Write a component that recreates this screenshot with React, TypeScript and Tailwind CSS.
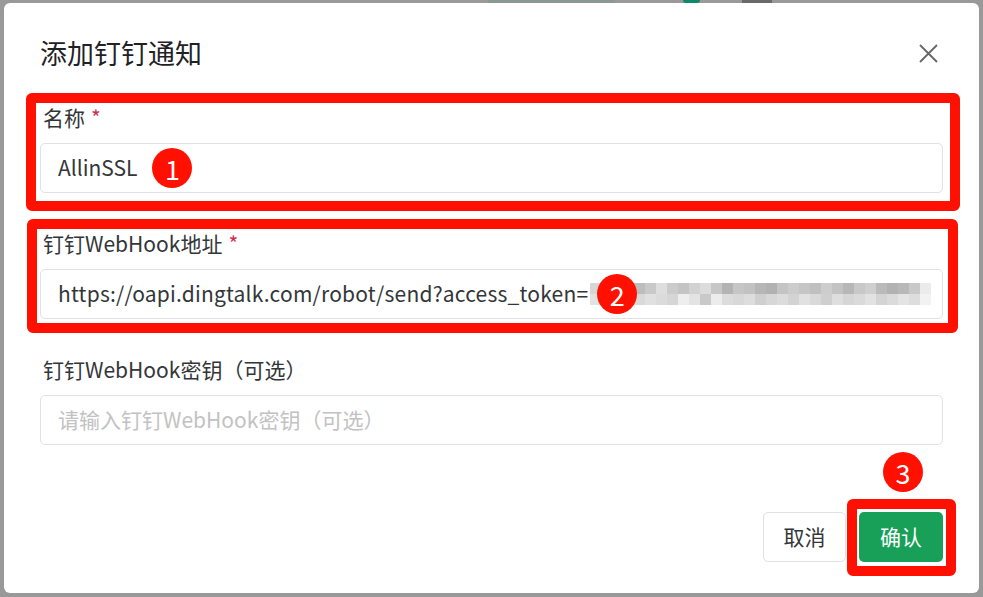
//External Imports
import React from "react";

//Setup the Mosaic Colours (Top and Bottom Rows of the Pixelated Token)
const mosaicTop = [
	"bg-[#d6d6d6]", "bg-[#cfcfcf]", "bg-[#c4c4c4]", "bg-[#c8c8c8]", "bg-[#bdbdbd]", "bg-[#c9c9c9]",
	"bg-[#dedede]", "bg-[#cbcbcb]", "bg-[#c4c4c4]", "bg-[#d2d2d2]", "bg-[#dcdcdc]", "bg-[#c7c7c7]",
	"bg-[#b3b3b3]", "bg-[#c6c6c6]", "bg-[#c2c2c2]", "bg-[#b6b6b6]", "bg-[#b1b1b1]", "bg-[#c4c4c4]",
	"bg-[#cccccc]", "bg-[#c5c5c5]", "bg-[#c0c0c0]", "bg-[#cdcdcd]", "bg-[#c3c3c3]", "bg-[#b7b7b7]",
	"bg-[#c8c8c8]", "bg-[#cfcfcf]", "bg-[#bababa]", "bg-[#b2b2b2]", "bg-[#b8b8b8]", "bg-[#c9c9c9]",
	"bg-[#ebebeb]",
];
const mosaicBottom = [
	"bg-[#e2e2e2]", "bg-[#dcdcdc]", "bg-[#d5d5d5]", "bg-[#dadada]", "bg-[#d9d9d9]", "bg-[#e0e0e0]",
	"bg-[#dbdbdb]", "bg-[#d6d6d6]", "bg-[#eeeeee]", "bg-[#e3e3e3]", "bg-[#c9c9c9]", "bg-[#ececec]",
	"bg-[#dcdcdc]", "bg-[#d8d8d8]", "bg-[#dddddd]", "bg-[#cfcfcf]", "bg-[#d7d7d7]", "bg-[#dcdcdc]",
	"bg-[#d3d3d3]", "bg-[#e1e1e1]", "bg-[#d9d9d9]", "bg-[#cfcfcf]", "bg-[#dedede]", "bg-[#d6d6d6]",
	"bg-[#dadada]", "bg-[#e2e2e2]", "bg-[#d4d4d4]", "bg-[#dbdbdb]", "bg-[#e4e4e4]", "bg-[#dddddd]",
	"bg-[#f2f2f2]",
];

//Numbered Annotation Badge
function Badge({ n, className = "" }: { n: number; className?: string }) {
	return (
		<span
			className={
				"flex h-[40px] w-[40px] shrink-0 items-center justify-center rounded-full bg-[#ff1000] text-[27px] leading-none text-white " +
				className
			}
		>
			{n}
		</span>
	);
}

//Red Annotation Frame
function Frame({ className }: { className: string }) {
	return (
		<div
			className={"pointer-events-none absolute rounded-[6px] border-[10px] border-[#ff1000] " + className}
		/>
	);
}

//Form Label
function Label({ text, required }: { text: string; required?: boolean }) {
	return (
		<div className="flex h-[41px] items-start pl-[3px] text-[21px] leading-[30px] text-[#333639]">
			{text}
			{required && <span className="ml-[6px] text-[#d03050]">*</span>}
		</div>
	);
}

//Setup the Page
export default function App() {
	return (
		<div
			className="relative h-[597px] w-[983px] overflow-hidden bg-[#999999]"
			style={{ fontFamily: '"Noto Sans CJK SC", "Noto Sans", sans-serif' }}
		>
			{/*Setup the Page Behind the Overlay*/}
			<div className="flex h-[3px]">
				<div className="ml-[488px] w-[126px] bg-[#8b9a90]" />
				<div className="ml-[69px] w-[17px] rounded-b-full bg-[#0f8a69]" />
				<div className="ml-[42px] w-[30px] bg-[#6a6a6a]" />
			</div>

			{/*Setup the Modal*/}
			<div className="absolute left-[4px] top-[3px] flex h-[590px] w-[975px] flex-col rounded-[6px] bg-white px-[36px] pb-[31px] pt-[30px]">
				{/*Setup the Header*/}
				<div className="flex h-[40px] items-center">
					<div className="text-[27px] leading-[40px] text-[#1f2225]">添加钉钉通知</div>
					<button className="ml-auto mr-[3px] flex h-[24px] w-[24px] items-center justify-center text-[#666666]">
						<svg width="19" height="19" viewBox="0 0 19 19" fill="none" stroke="currentColor" strokeWidth="1.8">
							<path d="M1 1 L18 18 M18 1 L1 18" />
						</svg>
					</button>
				</div>

				{/*Setup the Name Field*/}
				<div className="relative mt-[29px]">
					<Frame className="-bottom-[18px] -left-[14px] -right-[17px] -top-[9px]" />
					<Label text="名称" required />
					<div className="flex h-[50px] items-center rounded-[5px] border border-[#e0e0e6] px-[17px] text-[21px] text-[#333639]">
						AllinSSL
						<Badge n={1} className="ml-[15px]" />
					</div>
				</div>

				{/*Setup the WebHook Field*/}
				<div className="relative mt-[35px]">
					<Frame className="-bottom-[14px] -left-[13px] -right-[15px] -top-[9px]" />
					<Label text="钉钉WebHook地址" required />
					<div className="flex h-[50px] items-center overflow-hidden rounded-[5px] border border-[#e0e0e6] px-[17px] text-[21px] text-[#333639]">
						<span className="whitespace-nowrap tracking-[0.2px]">
							https://oapi.dingtalk.com/robot/send?access_token=
						</span>
						<div className="relative ml-[2px] flex flex-col">
							<div className="flex">
								{mosaicTop.map((c, i) => (
									<div key={i} className={"h-[11px] w-[11px] " + c} />
								))}
							</div>
							<div className="flex">
								{mosaicBottom.map((c, i) => (
									<div key={i} className={"h-[11px] w-[11px] " + c} />
								))}
							</div>
							<Badge n={2} className="absolute left-[7px] top-[-9px]" />
						</div>
					</div>
				</div>

				{/*Setup the Secret Field*/}
				<div className="mt-[35px]">
					<Label text="钉钉WebHook密钥（可选）" />
					<div className="flex h-[50px] items-center rounded-[5px] border border-[#e0e0e6] px-[17px] text-[21px] text-[#c2c2c2]">
						请输入钉钉WebHook密钥（可选）
					</div>
				</div>

				{/*Setup the Footer*/}
				<div className="mt-auto flex justify-end gap-[13px]">
					<button className="h-[50px] w-[83px] rounded-[5px] border border-[#e0e0e6] bg-white text-[21px] text-[#333639]">
						取消
					</button>
					<div className="relative">
						<Frame className="-bottom-[14px] -left-[12px] -right-[13px] -top-[13px]" />
						<Badge n={3} className="absolute left-[24px] top-[-60px]" />
						<button className="h-[50px] w-[84px] rounded-[5px] bg-[#18a058] text-[21px] text-white">确认</button>
					</div>
				</div>
			</div>
		</div>
	);
}
